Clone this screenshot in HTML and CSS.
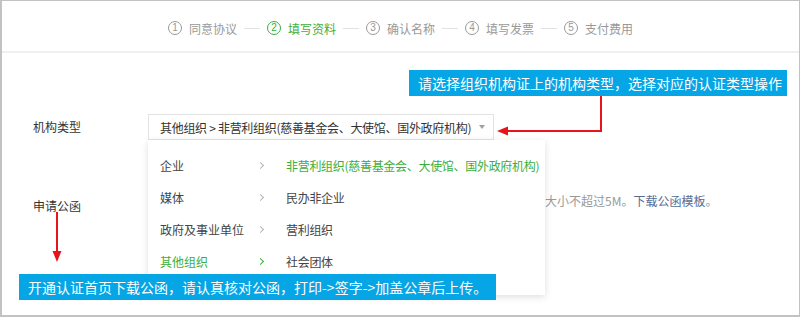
FILE: index.html
```html
<!DOCTYPE html>
<html lang="zh-CN">
<head>
    <meta charset="UTF-8">
    <meta name="viewport" content="width=device-width, initial-scale=1.0">
    <title>认证 - 填写资料</title>
    <link rel="stylesheet" href="styles.css">
</head>
<body>
    <div class="frame">
        <div class="steps">
            <div class="step"><span class="num">1</span>同意协议</div>
            <span class="step-line"></span>
            <div class="step active"><span class="num">2</span>填写资料</div>
            <span class="step-line"></span>
            <div class="step"><span class="num">3</span>确认名称</div>
            <span class="step-line"></span>
            <div class="step"><span class="num">4</span>填写发票</div>
            <span class="step-line"></span>
            <div class="step"><span class="num">5</span>支付费用</div>
        </div>

        <div class="form">
            <div class="form-row">
                <label class="form-label">机构类型</label>
                <div class="select">
                    <span class="select-value">其他组织 &gt; 非营利组织(慈善基金会、大使馆、国外政府机构)</span>
                    <i class="caret"></i>
                    <div class="dropdown">
                        <ul class="menu">
                            <li>企业<i class="chev"></i></li>
                            <li>媒体<i class="chev"></i></li>
                            <li>政府及事业单位<i class="chev"></i></li>
                            <li class="active">其他组织<i class="chev"></i></li>
                        </ul>
                        <ul class="menu sub">
                            <li class="active">非营利组织(慈善基金会、大使馆、国外政府机构)</li>
                            <li>民办非企业</li>
                            <li>营利组织</li>
                            <li>社会团体</li>
                        </ul>
                    </div>
                </div>
            </div>
            <div class="form-row upload-row">
                <label class="form-label">申请公函</label>
                <p class="hint">大小不超过5M。<a href="#">下载公函模板</a>。</p>
            </div>
        </div>

        <div class="tip tip-top">请选择组织机构证上的机构类型，选择对应的认证类型操作</div>
        <div class="tip tip-bottom">开通认证首页下载公函，请认真核对公函，打印-&gt;签字-&gt;加盖公章后上传。</div>

        <!-- 标注箭头 -->
        <svg class="arrows" width="800" height="317" viewBox="0 0 800 317">
            <path d="M601 96 V131 H505" fill="none" stroke="#e8141c" stroke-width="2"/>
            <polygon points="497,131 508,126.5 508,135.5" fill="#e8141c"/>
            <path d="M57 212 V253" fill="none" stroke="#e8141c" stroke-width="2"/>
            <polygon points="57,262 52.5,251 61.5,251" fill="#e8141c"/>
        </svg>
    </div>
</body>
</html>
```

FILE: styles.css
```css
body {
    margin: 0;
    font-family: "Noto Sans CJK SC", "Liberation Sans", sans-serif;
    font-size: 12px;
    color: #333;
    background: #fff;
}

.frame {
    position: relative;
    width: 800px;
    height: 317px;
    box-sizing: border-box;
    border-style: solid;
    border-color: #c2c2c2;
    border-width: 1px 1px 2px 2px;
    background: #fff;
    overflow: hidden;
}

/* 步骤条 */
.steps {
    height: 52px;
    box-sizing: border-box;
    padding-top: 4px;
    border-bottom: 2px solid #edf0f0;
    display: flex;
    align-items: center;
    justify-content: center;
    color: #999;
}

.step {
    display: flex;
    align-items: center;
    gap: 7px;
}

.step .num {
    width: 12px;
    height: 12px;
    border: 1px solid #999;
    border-radius: 50%;
    font-size: 10px;
    line-height: 12px;
    text-align: center;
    font-family: "Liberation Sans", sans-serif;
}

.step.active {
    color: #3cae3c;
}

.step.active .num {
    border-color: #3cae3c;
}

.step-line {
    width: 16px;
    height: 1px;
    margin: 0 7px;
    background: #e2e2e2;
}

/* 表单 */
.form {
    padding: 61px 0 0 31px;
}

.form-row {
    display: flex;
    align-items: center;
}

.form-label {
    width: 115px;
    flex-shrink: 0;
    line-height: 18px;
}

.select {
    position: relative;
    width: 346px;
    height: 26px;
    box-sizing: border-box;
    border: 1px solid #e3e3e3;
    padding: 0 8px 0 11px;
    display: flex;
    align-items: center;
    justify-content: space-between;
}

.select-value {
    white-space: nowrap;
    letter-spacing: -0.3px;
}

.caret {
    flex-shrink: 0;
    width: 0;
    height: 0;
    border-left: 3px solid transparent;
    border-right: 3px solid transparent;
    border-top: 4px solid #a0a0a0;
}

.dropdown {
    position: absolute;
    top: 25px;
    left: -1px;
    width: 397px;
    height: 155px;
    box-sizing: border-box;
    padding-top: 9px;
    background: #fff;
    box-shadow: 0 2px 7px rgba(0, 0, 0, 0.13);
    display: flex;
    z-index: 2;
}

.menu {
    list-style: none;
    margin: 0;
    padding: 0;
}

.menu li {
    height: 32px;
    display: flex;
    align-items: center;
    color: #444;
    white-space: nowrap;
}

.menu li.active {
    color: #3cae3c;
}

.menu:first-child {
    width: 138px;
    flex-shrink: 0;
}

.menu:first-child li {
    padding: 0 23px 0 12px;
    justify-content: space-between;
}

.sub li {
    letter-spacing: -0.3px;
}

.chev {
    width: 4px;
    height: 4px;
    border-top: 1px solid #b5b5b5;
    border-right: 1px solid #b5b5b5;
    transform: rotate(45deg);
}

.menu li.active .chev {
    border-color: #3cae3c;
}

.upload-row {
    margin-top: 52px;
    align-items: flex-start;
}

.upload-row .form-label {
    padding-top: 5px;
}

/* 左侧被下拉框遮住 */
.hint {
    margin: 0 0 0 397px;
    line-height: 18px;
    color: #999;
    white-space: nowrap;
}

.hint a {
    color: #576b95;
    text-decoration: none;
}

/* 标注说明 */
.tip {
    position: absolute;
    height: 26px;
    line-height: 26px;
    background: #05a5e6;
    color: #fff;
    font-size: 14px;
    white-space: nowrap;
    z-index: 3;
}

.tip-top {
    left: 407px;
    top: 69px;
    padding: 0 5px 0 9px;
}

.tip-bottom {
    left: 17px;
    top: 273px;
    padding: 0 9px;
}

.arrows {
    position: absolute;
    left: -2px;
    top: -1px;
    pointer-events: none;
    z-index: 4;
}
```
